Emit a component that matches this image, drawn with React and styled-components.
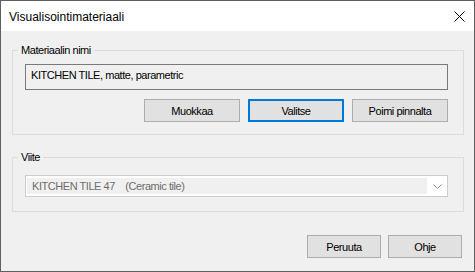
import React from 'react';
import styled, { createGlobalStyle } from 'styled-components';

const Global = createGlobalStyle`
  html, body {
    margin: 0;
    padding: 0;
    overflow: hidden;
    background: #f0f0f0;
  }
`;

const Window = styled.div`
  width: 475px;
  height: 272px;
  box-sizing: border-box;
  border: 1px solid #5f5f5f;
  background: #f0f0f0;
  display: flex;
  flex-direction: column;
  font-family: "Liberation Sans", Arial, sans-serif;
  font-size: 11px;
  letter-spacing: -0.45px;
  color: #000;
`;

const TitleBar = styled.div`
  height: 30px;
  flex: none;
  background: #fff;
  display: flex;
  align-items: center;
  justify-content: space-between;
  padding: 1px 9px 0 8px;
  box-sizing: border-box;
`;

const Title = styled.div`
  font-size: 12px;
  letter-spacing: 0;
  line-height: 14px;
`;

const CloseIcon = styled.svg`
  display: block;
  margin-top: -1px;
`;

const Body = styled.div`
  flex: 1;
  display: flex;
  flex-direction: column;
  padding: 12px 10px 0 11px;
`;

const Group = styled.fieldset`
  margin: ${p => p.$top || 0}px 0 0 0;
  width: 452px;
  box-sizing: border-box;
  border: 1px solid #dcdcdc;
  padding: ${p => p.$pad};
  min-inline-size: 0;
`;

const Legend = styled.legend`
  padding: 0 3px;
  margin-left: -7px;
  line-height: 14px;
  color: #000;
`;

const TextBox = styled.div`
  width: 423px;
  height: 26px;
  box-sizing: border-box;
  border: 1px solid #7a7a7a;
  background: #f0f0f0;
  padding: 3px 0 0 5px;
  line-height: 14px;
`;

const ButtonRow = styled.div`
  display: flex;
  justify-content: flex-end;
  gap: 8px;
  margin-top: ${p => p.$top}px;
  width: ${p => p.$width}px;
`;

const Button = styled.div`
  width: ${p => p.$w}px;
  height: ${p => p.$h}px;
  box-sizing: border-box;
  background: #e1e1e1;
  border: ${p => (p.$focused ? '2px solid #0078d7' : '1px solid #adadad')};
  display: flex;
  align-items: center;
  justify-content: center;
  line-height: 14px;
`;

const Combo = styled.div`
  width: 423px;
  height: 22px;
  box-sizing: border-box;
  border: 1px solid #cccccc;
  background: #fff;
  padding: 2px 0 2px 1px;
  display: flex;
  align-items: stretch;
`;

const ComboValue = styled.div`
  flex: 1;
  background: #f0f0f0;
  color: #6d6d6d;
  white-space: pre;
  padding-left: 5px;
  line-height: 16px;
`;

const ComboArrow = styled.div`
  width: 19px;
  display: flex;
  align-items: center;
  justify-content: center;
  padding-left: 1px;
`;

const Footer = styled.div`
  display: flex;
  justify-content: flex-end;
  gap: 7px;
  margin-top: 23px;
  padding-right: 2px;
`;

export default function App() {
  return (
    <>
      <Global />
      <Window>
        <TitleBar>
          <Title>Visualisointimateriaali</Title>
          <CloseIcon width="11" height="11" viewBox="0 0 11 11">
            <path d="M0.5 0.5 L10.5 10.5 M10.5 0.5 L0.5 10.5" stroke="#000" strokeWidth="1" fill="none" />
          </CloseIcon>
        </TitleBar>
        <Body>
          <Group $pad="7px 15px 12px 12px">
            <Legend>Materiaalin nimi</Legend>
            <TextBox>KITCHEN TILE, matte, parametric</TextBox>
            <ButtonRow $top={9} $width={423}>
              <Button $w={96} $h={23}>Muokkaa</Button>
              <Button $w={96} $h={23} $focused>Valitse</Button>
              <Button $w={96} $h={23}>Poimi pinnalta</Button>
            </ButtonRow>
          </Group>
          <Group $top={15} $pad="11px 15px 14px 12px">
            <Legend>Viite</Legend>
            <Combo>
              <ComboValue>{'KITCHEN TILE 47    (Ceramic tile)'}</ComboValue>
              <ComboArrow>
                <svg width="9" height="5" viewBox="0 0 9 5">
                  <path d="M0.5 0.5 L4.5 4.5 L8.5 0.5" stroke="#8a8a8a" strokeWidth="1" fill="none" />
                </svg>
              </ComboArrow>
            </Combo>
          </Group>
          <Footer>
            <Button $w={74} $h={23}>Peruuta</Button>
            <Button $w={74} $h={23}>Ohje</Button>
          </Footer>
        </Body>
      </Window>
    </>
  );
}
